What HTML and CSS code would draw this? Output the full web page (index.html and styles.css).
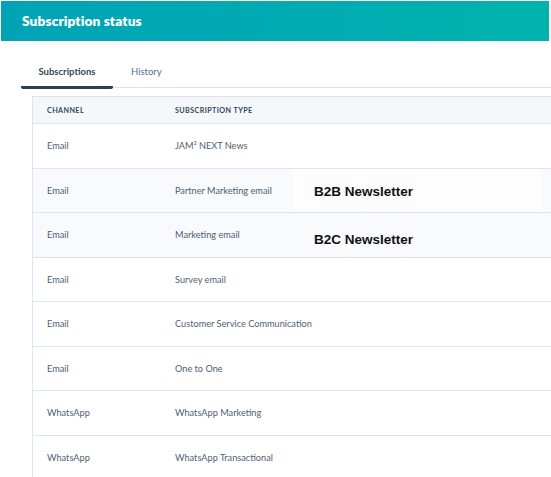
FILE: index.html
```html
<!DOCTYPE html>
<html lang="en">
<head>
<meta charset="utf-8">
<title>Subscription status</title>
<link rel="stylesheet" href="styles.css">
</head>
<body>
<div class="page">
  <header class="banner">
    <h1 class="banner-title">Subscription status</h1>
  </header>
  <nav class="tabs">
    <div class="tab tab-active">Subscriptions</div>
    <div class="tab">History</div>
  </nav>
  <div class="table">
    <div class="row head">
      <div class="cell">CHANNEL</div>
      <div class="cell">SUBSCRIPTION TYPE</div>
    </div>
    <div class="row">
      <div class="cell">Email</div>
      <div class="cell">JAM³ NEXT News</div>
    </div>
    <div class="row shaded">
      <div class="cell">Email</div>
      <div class="cell">Partner Marketing email</div>
      <div class="note note-white">B2B Newsletter</div>
    </div>
    <div class="row shaded">
      <div class="cell">Email</div>
      <div class="cell">Marketing email</div>
      <div class="note note-low">B2C Newsletter</div>
    </div>
    <div class="row">
      <div class="cell">Email</div>
      <div class="cell">Survey email</div>
    </div>
    <div class="row">
      <div class="cell">Email</div>
      <div class="cell">Customer Service Communication</div>
    </div>
    <div class="row">
      <div class="cell">Email</div>
      <div class="cell">One to One</div>
    </div>
    <div class="row">
      <div class="cell">WhatsApp</div>
      <div class="cell">WhatsApp Marketing</div>
    </div>
    <div class="row">
      <div class="cell">WhatsApp</div>
      <div class="cell">WhatsApp Transactional</div>
    </div>
  </div>
</div>
</body>
</html>
```
FILE: styles.css
```css
html, body {
  margin: 0;
  padding: 0;
  background: #ffffff;
}
body {
  font-family: Lato, "Noto Sans", sans-serif;
  color: #33475b;
  overflow: hidden;
}
.page {
  padding-top: 1px;
}
.banner {
  margin: 0 2px 0 1px;
  height: 40px;
  background: linear-gradient(90deg, #00a3b6 0%, #00acb1 60%, #00b3ad 100%);
  display: flex;
  align-items: center;
  padding-left: 21px;
}
.banner-title {
  margin: 0;
  font-family: Lato, "Open Sans", sans-serif;
  font-weight: 800;
  font-size: 13.7px;
  color: #ffffff;
  letter-spacing: 0.1px;
  padding-bottom: 2px;
}
.tabs {
  margin-top: 21px;
  margin-left: 21px;
  display: flex;
  border-bottom: 1px solid #dfe3eb;
  height: 25px;
}
.tab {
  font-size: 9.5px;
  color: #516f90;
  padding: 4px 0 0;
  height: 20px;
  box-sizing: border-box;
}
.tab-active {
  width: 92px;
  text-align: center;
  color: #33475b;
  font-weight: 700;
  border-bottom: 3px solid #2d3e50;
  border-radius: 2px;
  height: 27px;
  margin-right: 18px;
}
.table {
  margin-top: 8px;
  margin-left: 32px;
  border-left: 1px solid #dfe3eb;
  border-top: 1px solid #dfe3eb;
}
.row {
  position: relative;
  display: grid;
  grid-template-columns: 128px 1fr;
  align-items: center;
  padding-left: 14px;
  height: 43.5px;
  border-bottom: 1px solid #dfe3eb;
  font-size: 9.2px;
  color: #4f5f72;
}
.row.head {
  height: 26px;
  background: #f5f8fa;
  font-size: 7.2px;
  font-weight: 700;
  letter-spacing: 0.4px;
  color: #33475b;
}
.row.shaded {
  background: #f8fafd;
}
.note {
  position: absolute;
  left: 260px;
  top: 0;
  bottom: 0;
  width: 248px;
  padding-left: 21px;
  padding-top: 2px;
  display: flex;
  align-items: center;
  font-family: "Liberation Sans", Arial, sans-serif;
  font-weight: 700;
  font-size: 13.5px;
  color: #111111;
  box-sizing: border-box;
}
.note-white {
  background: #fdfdfe;
}
.note-low {
  padding-top: 9px;
}
```
